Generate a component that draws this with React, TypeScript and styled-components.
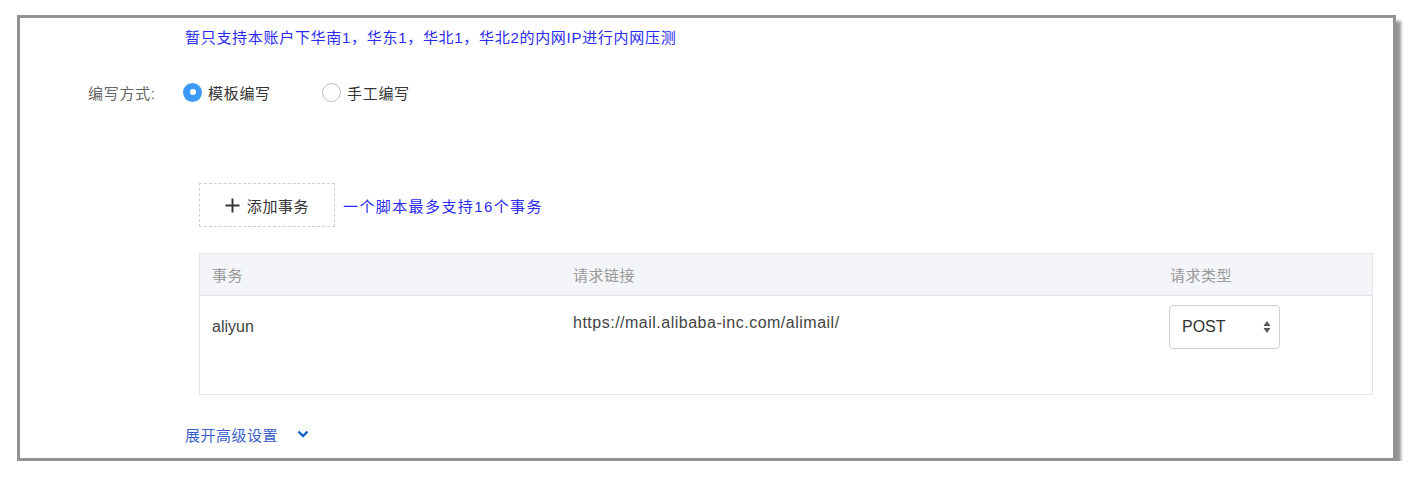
import styled, { createGlobalStyle } from "styled-components";

const GlobalStyle = createGlobalStyle`
  html, body {
    margin: 0;
    padding: 0;
    background: #ffffff;
  }
  body {
    font-family: "Liberation Sans", "Noto Sans CJK SC", sans-serif;
  }
`;

type Transaction = {
  name: string;
  url: string;
  method: string;
};

const transactions: Transaction[] = [
  {
    name: "aliyun",
    url: "https://mail.alibaba-inc.com/alimail/",
    method: "POST",
  },
];

const App = () => {
  return (
    <>
      <GlobalStyle />
      <Frame>
        <Note>暂只支持本账户下华南1，华东1，华北1，华北2的内网IP进行内网压测</Note>
        <ModeRow>
          <ModeLabel>编写方式:</ModeLabel>
          <Radio>
            <RadioDot checked />
            模板编写
          </Radio>
          <Radio>
            <RadioDot />
            手工编写
          </Radio>
        </ModeRow>

        <AddRow>
          <AddButton>
            <PlusIcon viewBox="0 0 14 14">
              <path d="M7 0.5v13M0.5 7h13" stroke="#333" strokeWidth="1.8" />
            </PlusIcon>
            添加事务
          </AddButton>
          <Hint>一个脚本最多支持16个事务</Hint>
        </AddRow>

        <Table>
          <HeadRow>
            <Cell width={361}>事务</Cell>
            <Cell width={597}>请求链接</Cell>
            <Cell>请求类型</Cell>
          </HeadRow>
          {transactions.map((t) => (
            <BodyRow key={t.name}>
              <Cell width={361}>
                <CellText offset={12}>{t.name}</CellText>
              </Cell>
              <Cell width={597}>
                <CellText offset={8} spacing={0.5}>
                  {t.url}
                </CellText>
              </Cell>
              <Cell>
                <Select>
                  {t.method}
                  <SelectArrows viewBox="0 0 8 14">
                    <path d="M4 1 L7.5 6 H0.5 Z" fill="#555" />
                    <path d="M4 13 L7.5 8 H0.5 Z" fill="#555" />
                  </SelectArrows>
                </Select>
              </Cell>
            </BodyRow>
          ))}
        </Table>

        <Expand>
          展开高级设置
          <Chevron viewBox="0 0 12 8">
            <path d="M1.5 1.5 L6 6 L10.5 1.5" stroke="#1162c8" strokeWidth="2.4" fill="none" />
          </Chevron>
        </Expand>
      </Frame>
    </>
  );
};

export default App;

const Frame = styled.div`
  box-sizing: border-box;
  margin: 15px 0 0 17px;
  width: 1379px;
  border: 3px solid #929292;
  background: #fff;
  box-shadow: 5px 6px 3px rgba(0, 0, 0, 0.42);
  display: flex;
  flex-direction: column;
  padding: 10px 0 14px;
`;

const Note = styled.div`
  margin-left: 165px;
  font-size: 15px;
  line-height: 20px;
  letter-spacing: 0.7px;
  color: #2a2af2;
`;

const ModeRow = styled.div`
  margin-top: 32px;
  display: flex;
  align-items: center;
  height: 24px;
  font-size: 15px;
  letter-spacing: 0.7px;
`;

const ModeLabel = styled.span`
  margin-left: 68px;
  width: 95px;
  color: #666;
`;

const Radio = styled.label`
  display: flex;
  align-items: center;
  gap: 6px;
  color: #333;
  width: 139px;
`;

const RadioDot = styled.span<{ checked?: boolean }>`
  box-sizing: border-box;
  width: 19px;
  height: 19px;
  border-radius: 50%;
  border: ${(p) => (p.checked ? "none" : "1px solid #bdbdbd")};
  background: ${(p) => (p.checked ? "#3c99f7" : "#fff")};
  display: flex;
  align-items: center;
  justify-content: center;
  &::after {
    content: "";
    display: ${(p) => (p.checked ? "block" : "none")};
    width: 6px;
    height: 6px;
    border-radius: 50%;
    background: #fff;
  }
`;

const AddRow = styled.div`
  margin: 79px 0 0 179px;
  display: flex;
  align-items: center;
  gap: 8px;
`;

const AddButton = styled.div`
  box-sizing: border-box;
  width: 136px;
  height: 44px;
  border: 1px dashed #cfcfcf;
  display: flex;
  align-items: center;
  justify-content: center;
  gap: 7px;
  font-size: 15px;
  letter-spacing: 0.6px;
  color: #333;
`;

const PlusIcon = styled.svg`
  width: 15px;
  height: 15px;
`;

const Hint = styled.span`
  font-size: 15px;
  letter-spacing: 1.4px;
  color: #2a2af2;
`;

const Table = styled.div`
  box-sizing: border-box;
  margin: 26px 0 0 179px;
  width: 1174px;
  border: 1px solid #e3e6eb;
`;

const HeadRow = styled.div`
  display: flex;
  align-items: center;
  height: 41px;
  background: #f4f5f8;
  border-bottom: 1px solid #e1e4e9;
  font-size: 15px;
  letter-spacing: 0.5px;
  color: #999;
`;

const BodyRow = styled.div`
  display: flex;
  align-items: flex-start;
  height: 98px;
  padding-top: 9px;
  box-sizing: border-box;
  font-size: 16px;
  color: #444;
`;

const Cell = styled.div<{ width?: number }>`
  box-sizing: border-box;
  padding-left: 12px;
  ${(p) => (p.width ? `width: ${p.width}px;` : "flex: 1;")}
`;

const CellText = styled.div<{ offset: number; spacing?: number }>`
  margin-top: ${(p) => p.offset}px;
  line-height: 20px;
  letter-spacing: ${(p) => p.spacing ?? 0}px;
`;

const Select = styled.div`
  box-sizing: border-box;
  margin-left: -1px;
  width: 111px;
  height: 44px;
  border: 1px solid #cfcfcf;
  border-radius: 4px;
  display: flex;
  align-items: center;
  justify-content: space-between;
  padding: 0 8px 0 12px;
  font-size: 16px;
  color: #333;
`;

const SelectArrows = styled.svg`
  width: 8px;
  height: 14px;
`;

const Expand = styled.div`
  margin: 29px 0 0 165px;
  display: flex;
  align-items: center;
  gap: 19px;
  height: 20px;
  font-size: 15px;
  letter-spacing: 0.5px;
  color: #3a5fc8;
`;

const Chevron = styled.svg`
  width: 12px;
  height: 8px;
`;
